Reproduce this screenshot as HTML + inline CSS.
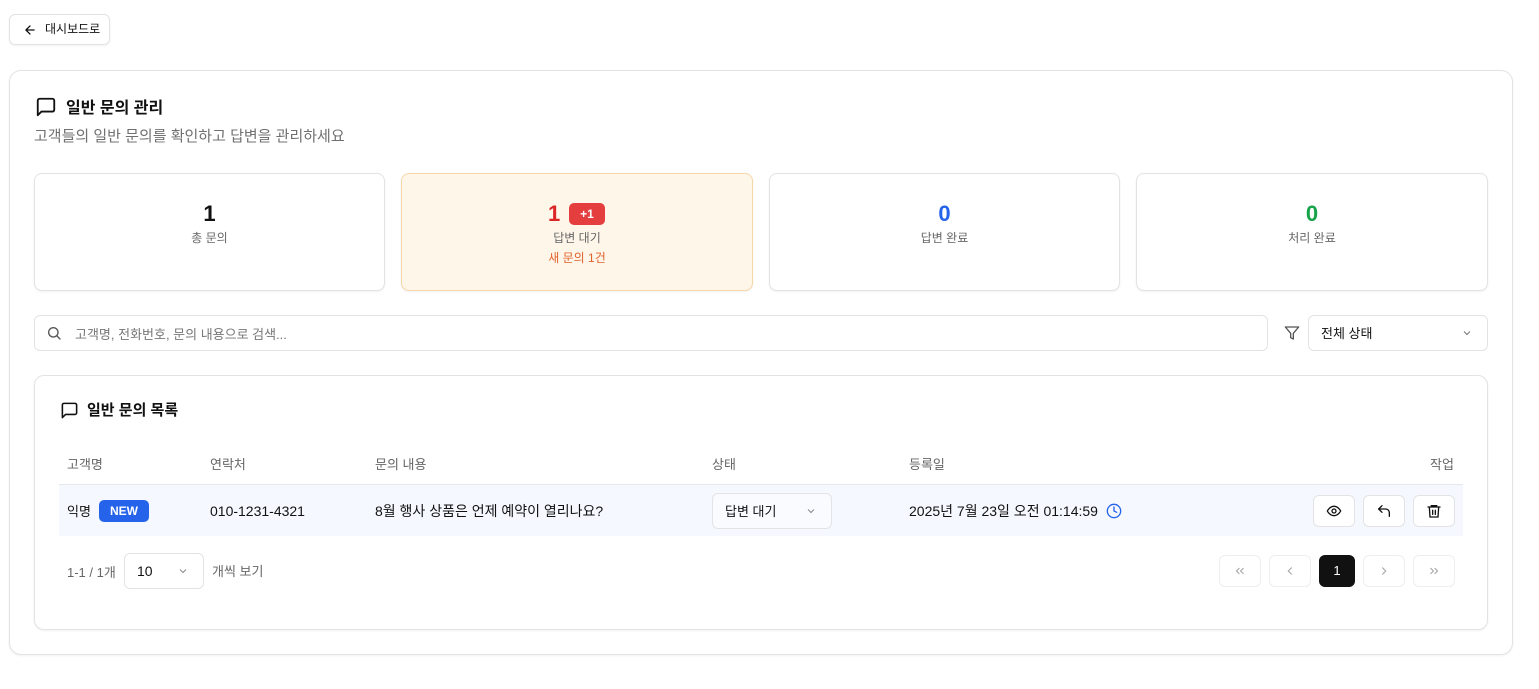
<!DOCTYPE html>
<html><head><meta charset="utf-8"><style>
*{box-sizing:border-box;margin:0;padding:0}
body{width:1539px;height:689px;background:#fff;font-family:"Liberation Sans","Noto Sans CJK KR",sans-serif;color:#111;position:relative;overflow:hidden}
.a{position:absolute}
.box{position:absolute;border:1px solid #e3e3e3;border-radius:8px;background:#fff}
.sh{box-shadow:0 1px 2px rgba(0,0,0,.06)}
.c{text-align:center}
.num{font-size:22px;font-weight:bold}
.lbl{font-size:12px;color:#666}
.th{position:absolute;top:454px;font-size:13px;color:#666}
.td{position:absolute;font-size:14px;color:#111}
svg{display:block}
</style></head><body>
<div class="box sh" style="left:9px;top:14px;width:101px;height:31px;border-radius:6px"></div>
<svg class="a" style="left:23px;top:23px" width="14" height="14" viewBox="0 0 24 24" fill="none" stroke="#111" stroke-width="2.2" stroke-linecap="round" stroke-linejoin="round"><path d="M19 12H5M12 19l-7-7 7-7"/></svg>
<div class="a" style="left:45px;top:20px;font-size:12px">대시보드로</div>

<div class="box sh" style="left:9px;top:70px;width:1504px;height:585px;border-radius:12px"></div>
<svg class="a" style="left:35px;top:96px" width="22" height="22" viewBox="0 0 24 24" fill="none" stroke="#111" stroke-width="2" stroke-linejoin="round"><path d="M21 15a2 2 0 0 1-2 2H7l-4 4V5a2 2 0 0 1 2-2h14a2 2 0 0 1 2 2z"/></svg>
<div class="a" style="left:66px;top:94px;font-size:16px;font-weight:bold">일반 문의 관리</div>
<div class="a" style="left:34px;top:125px;font-size:15px;color:#707070">고객들의 일반 문의를 확인하고 답변을 관리하세요</div>

<div class="box sh" style="left:34px;top:173px;width:351px;height:118px"></div>
<div class="a c num" style="left:34px;top:201px;width:351px">1</div>
<div class="a c lbl" style="left:34px;top:229px;width:351px">총 문의</div>

<div class="box sh" style="left:401px;top:173px;width:352px;height:118px;background:#fff6ea;border-color:#f6d7a8"></div>
<div class="a num" style="left:548px;top:201px;color:#dc2626">1</div>
<div class="a" style="left:569px;top:203px;width:36px;height:22px;background:#e53e3e;border-radius:5px;color:#fff;font-size:12px;font-weight:bold;text-align:center;line-height:22px">+1</div>
<div class="a c lbl" style="left:401px;top:229px;width:352px">답변 대기</div>
<div class="a c" style="left:401px;top:249px;width:352px;font-size:12px;color:#e0622a">새 문의 1건</div>

<div class="box sh" style="left:769px;top:173px;width:351px;height:118px"></div>
<div class="a c num" style="left:769px;top:201px;width:351px;color:#2563eb">0</div>
<div class="a c lbl" style="left:769px;top:229px;width:351px">답변 완료</div>

<div class="box sh" style="left:1136px;top:173px;width:352px;height:118px"></div>
<div class="a c num" style="left:1136px;top:201px;width:352px;color:#16a34a">0</div>
<div class="a c lbl" style="left:1136px;top:229px;width:352px">처리 완료</div>

<div class="box" style="left:34px;top:315px;width:1234px;height:36px;border-radius:6px"></div>
<svg class="a" style="left:46px;top:325px" width="16" height="16" viewBox="0 0 24 24" fill="none" stroke="#555" stroke-width="2" stroke-linecap="round"><circle cx="11" cy="11" r="7"/><path d="M21 21l-4.3-4.3"/></svg>
<div class="a" style="left:75px;top:324px;font-size:13px;color:#777">고객명, 전화번호, 문의 내용으로 검색...</div>
<svg class="a" style="left:1284px;top:325px" width="16" height="16" viewBox="0 0 24 24" fill="none" stroke="#555" stroke-width="2" stroke-linejoin="round"><path d="M22 3H2l8 9.5V19l4 2v-8.5z"/></svg>
<div class="box" style="left:1308px;top:315px;width:180px;height:36px;border-radius:6px"></div>
<div class="a" style="left:1321px;top:323px;font-size:13px">전체 상태</div>
<svg class="a" style="left:1461px;top:327px" width="12" height="12" viewBox="0 0 24 24" fill="none" stroke="#777" stroke-width="2.2"><path d="M6 9l6 6 6-6"/></svg>

<div class="box sh" style="left:34px;top:375px;width:1454px;height:255px;border-radius:10px"></div>
<svg class="a" style="left:60px;top:401px" width="19" height="19" viewBox="0 0 24 24" fill="none" stroke="#111" stroke-width="2" stroke-linejoin="round"><path d="M21 15a2 2 0 0 1-2 2H7l-4 4V5a2 2 0 0 1 2-2h14a2 2 0 0 1 2 2z"/></svg>
<div class="a" style="left:87px;top:399px;font-size:15px;font-weight:bold">일반 문의 목록</div>

<div class="th" style="left:67px">고객명</div>
<div class="th" style="left:210px">연락처</div>
<div class="th" style="left:375px">문의 내용</div>
<div class="th" style="left:712px">상태</div>
<div class="th" style="left:909px">등록일</div>
<div class="th" style="left:1430px">작업</div>
<div class="a" style="left:59px;top:484px;width:1404px;height:1px;background:#e5e7eb"></div>
<div class="a" style="left:59px;top:485px;width:1404px;height:51px;background:#f5f9ff"></div>

<div class="td" style="left:67px;top:501px;font-size:13px">익명</div>
<div class="a" style="left:99px;top:500px;width:50px;height:22px;background:#2563eb;border-radius:5px;color:#fff;font-size:12px;font-weight:bold;text-align:center;line-height:22px">NEW</div>
<div class="td" style="left:210px;top:503px">010-1231-4321</div>
<div class="td" style="left:375px;top:501px">8월 행사 상품은 언제 예약이 열리나요?</div>
<div class="box" style="left:712px;top:493px;width:120px;height:36px;border-radius:6px;background:#f9fbfe"></div>
<div class="td" style="left:725px;top:501px;font-size:13px">답변 대기</div>
<svg class="a" style="left:805px;top:505px" width="12" height="12" viewBox="0 0 24 24" fill="none" stroke="#888" stroke-width="2"><path d="M6 9l6 6 6-6"/></svg>
<div class="td" style="left:909px;top:501px">2025년 7월 23일 오전 01:14:59</div>
<svg class="a" style="left:1106px;top:503px" width="16" height="16" viewBox="0 0 24 24" fill="none" stroke="#2563eb" stroke-width="2" stroke-linecap="round"><circle cx="12" cy="12" r="10"/><path d="M12 6v6l4 2"/></svg>

<div class="box" style="left:1313px;top:495px;width:42px;height:32px;border-radius:6px"></div>
<svg class="a" style="left:1326px;top:503px" width="16" height="16" viewBox="0 0 24 24" fill="none" stroke="#111" stroke-width="2"><path d="M2 12s3.5-7 10-7 10 7 10 7-3.5 7-10 7S2 12 2 12z"/><circle cx="12" cy="12" r="3"/></svg>
<div class="box" style="left:1363px;top:495px;width:42px;height:32px;border-radius:6px"></div>
<svg class="a" style="left:1376px;top:503px" width="16" height="16" viewBox="0 0 24 24" fill="none" stroke="#111" stroke-width="2" stroke-linecap="round" stroke-linejoin="round"><path d="M9 14L4 9l5-5"/><path d="M4 9h10.5a5.5 5.5 0 0 1 5.5 5.5V20"/></svg>
<div class="box" style="left:1413px;top:495px;width:42px;height:32px;border-radius:6px"></div>
<svg class="a" style="left:1426px;top:503px" width="16" height="16" viewBox="0 0 24 24" fill="none" stroke="#111" stroke-width="2" stroke-linecap="round"><path d="M3 6h18M8 6V4h8v2M5 6l1 15h12l1-15M10 11v6M14 11v6"/></svg>

<div class="a" style="left:67px;top:562px;font-size:13px;color:#666">1-1 / 1개</div>
<div class="box" style="left:124px;top:553px;width:80px;height:36px;border-radius:6px"></div>
<div class="a" style="left:137px;top:563px;font-size:14px">10</div>
<svg class="a" style="left:177px;top:565px" width="12" height="12" viewBox="0 0 24 24" fill="none" stroke="#888" stroke-width="2"><path d="M6 9l6 6 6-6"/></svg>
<div class="a" style="left:212px;top:561px;font-size:13px;color:#666">개씩 보기</div>

<div class="box" style="left:1219px;top:555px;width:42px;height:32px;border-radius:6px;border-color:#eee"></div>
<svg class="a" style="left:1233px;top:564px" width="14" height="14" viewBox="0 0 24 24" fill="none" stroke="#aaa" stroke-width="2"><path d="M11 17l-5-5 5-5M18 17l-5-5 5-5"/></svg>
<div class="box" style="left:1269px;top:555px;width:42px;height:32px;border-radius:6px;border-color:#eee"></div>
<svg class="a" style="left:1283px;top:564px" width="14" height="14" viewBox="0 0 24 24" fill="none" stroke="#aaa" stroke-width="2"><path d="M15 18l-6-6 6-6"/></svg>
<div class="a" style="left:1319px;top:555px;width:36px;height:32px;border-radius:6px;background:#111;color:#fff;font-size:13px;text-align:center;line-height:32px">1</div>
<div class="box" style="left:1363px;top:555px;width:42px;height:32px;border-radius:6px;border-color:#eee"></div>
<svg class="a" style="left:1377px;top:564px" width="14" height="14" viewBox="0 0 24 24" fill="none" stroke="#aaa" stroke-width="2"><path d="M9 18l6-6-6-6"/></svg>
<div class="box" style="left:1413px;top:555px;width:42px;height:32px;border-radius:6px;border-color:#eee"></div>
<svg class="a" style="left:1427px;top:564px" width="14" height="14" viewBox="0 0 24 24" fill="none" stroke="#aaa" stroke-width="2"><path d="M13 17l5-5-5-5M6 17l5-5-5-5"/></svg>
</body></html>
